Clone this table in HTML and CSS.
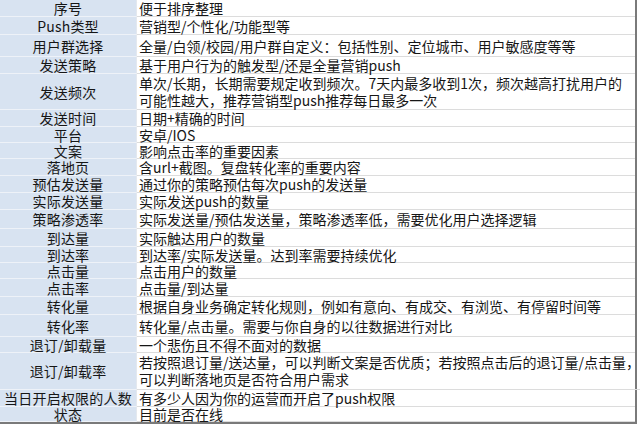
FILE: index.html
```html
<!DOCTYPE html>
<html lang="zh-CN">
<head>
<meta charset="utf-8">
<title>Push 字段说明</title>
<link rel="stylesheet" href="styles.css">
</head>
<body>
<div class="sheet">
  <div class="row h17"><div class="key">序号</div><div class="val">便于排序整理</div></div>
  <div class="row h18"><div class="key">Push类型</div><div class="val">营销型/个性化/功能型等</div></div>
  <div class="row h22"><div class="key">用户群选择</div><div class="val">全量/白领/校园/用户群自定义：包括性别、定位城市、用户敏感度等等</div></div>
  <div class="row h17"><div class="key">发送策略</div><div class="val">基于用户行为的触发型/还是全量营销push</div></div>
  <div class="row h36"><div class="key">发送频次</div><div class="val two">单次/长期，长期需要规定收到频次。7天内最多收到1次，频次越高打扰用户的<br>可能性越大，推荐营销型push推荐每日最多一次</div></div>
  <div class="row h17"><div class="key">发送时间</div><div class="val">日期+精确的时间</div></div>
  <div class="row h16"><div class="key">平台</div><div class="val">安卓/IOS</div></div>
  <div class="row h16"><div class="key">文案</div><div class="val">影响点击率的重要因素</div></div>
  <div class="row h17"><div class="key">落地页</div><div class="val">含url+截图。复盘转化率的重要内容</div></div>
  <div class="row h17"><div class="key">预估发送量</div><div class="val">通过你的策略预估每次push的发送量</div></div>
  <div class="row h17"><div class="key">实际发送量</div><div class="val">实际发送push的数量</div></div>
  <div class="row h19"><div class="key">策略渗透率</div><div class="val">实际发送量/预估发送量，策略渗透率低，需要优化用户选择逻辑</div></div>
  <div class="row h18"><div class="key">到达量</div><div class="val">实际触达用户的数量</div></div>
  <div class="row h16"><div class="key">到达率</div><div class="val">到达率/实际发送量。达到率需要持续优化</div></div>
  <div class="row h16"><div class="key">点击量</div><div class="val">点击用户的数量</div></div>
  <div class="row h18"><div class="key">点击率</div><div class="val">点击量/到达量</div></div>
  <div class="row h18"><div class="key">转化量</div><div class="val">根据自身业务确定转化规则，例如有意向、有成交、有浏览、有停留时间等</div></div>
  <div class="row h22"><div class="key">转化率</div><div class="val">转化量/点击量。需要与你自身的以往数据进行对比</div></div>
  <div class="row h16"><div class="key">退订/卸载量</div><div class="val">一个悲伤且不得不面对的数据</div></div>
  <div class="row h37"><div class="key">退订/卸载率</div><div class="val two">若按照退订量/送达量，可以判断文案是否优质；若按照点击后的退订量/点击量，<br>可以判断落地页是否符合用户需求</div></div>
  <div class="row h17"><div class="key">当日开启权限的人数</div><div class="val">有多少人因为你的运营而开启了push权限</div></div>
  <div class="row h15"><div class="key">状态</div><div class="val">目前是否在线</div></div>
</div>
</body>
</html>
```

FILE: styles.css
```css
html, body {
  margin: 0;
  padding: 0;
  background: #ffffff;
}

body {
  font-family: "Noto Sans CJK SC", "Noto Sans", sans-serif;
  font-size: 14px;
  color: #161616;
  width: 640px;
  height: 424px;
  overflow: hidden;
}

.sheet {
  width: 635px;
  border-right: 2px solid #7a7a7a;
  border-bottom: 2px solid #7a7a7a;
  display: flex;
  flex-direction: column;
}

.row {
  display: grid;
  grid-template-columns: 137px 1fr;
  box-sizing: border-box;
}

.key {
  background: #d8e3f1;
  border-bottom: 1px solid #eef2f8;
  border-right: 1px solid #e4e8ee;
  display: flex;
  align-items: center;
  justify-content: center;
  line-height: 14px;
  white-space: nowrap;
  letter-spacing: 0.2px;
}

.val {
  border-bottom: 1px solid #dcdcdc;
  display: flex;
  align-items: center;
  padding-left: 2px;
  line-height: 14px;
  white-space: nowrap;
}

.val.two {
  line-height: 17px;
}

.h15 { height: 15px; }
.h16 { height: 16px; }
.h17 { height: 17px; }
.h18 { height: 18px; }
.h19 { height: 19px; }
.h22 { height: 22px; }
.h36 { height: 36px; }
.h37 { height: 37px; }
```
